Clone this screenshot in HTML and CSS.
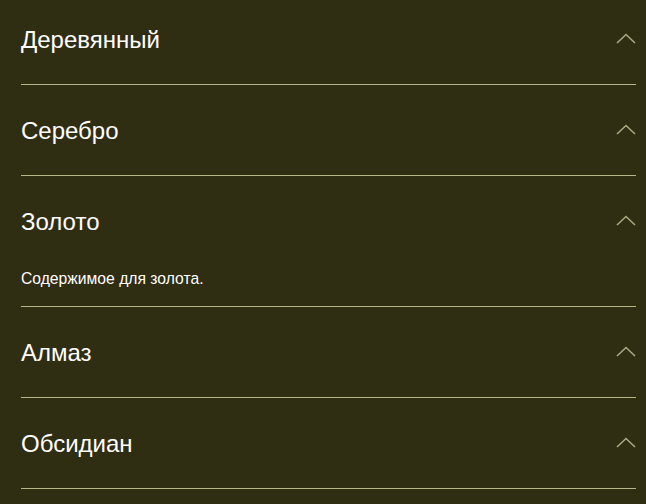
FILE: index.html
```html
<!DOCTYPE html>
<html lang="ru">
<head>
    <meta charset="UTF-8">
    <meta name="viewport" content="width=device-width, initial-scale=1.0">
    <title>Уровни</title>
    <link rel="stylesheet" href="styles.css">
</head>
<body>

<!-- Список уровней -->
<div class="accordion">
    <div class="item">
        <div class="item-header">
            <span class="item-title">Деревянный</span>
            <svg class="chevron" width="20" height="11" viewBox="0 0 20 11"><path d="M1 10 L10 1.5 L19 10" /></svg>
        </div>
    </div>
    <div class="item">
        <div class="item-header">
            <span class="item-title">Серебро</span>
            <svg class="chevron" width="20" height="11" viewBox="0 0 20 11"><path d="M1 10 L10 1.5 L19 10" /></svg>
        </div>
    </div>
    <div class="item open">
        <div class="item-header">
            <span class="item-title">Золото</span>
            <svg class="chevron" width="20" height="11" viewBox="0 0 20 11"><path d="M1 10 L10 1.5 L19 10" /></svg>
        </div>
        <div class="item-body">Содержимое для золота.</div>
    </div>
    <div class="item">
        <div class="item-header">
            <span class="item-title">Алмаз</span>
            <svg class="chevron" width="20" height="11" viewBox="0 0 20 11"><path d="M1 10 L10 1.5 L19 10" /></svg>
        </div>
    </div>
    <div class="item">
        <div class="item-header">
            <span class="item-title">Обсидиан</span>
            <svg class="chevron" width="20" height="11" viewBox="0 0 20 11"><path d="M1 10 L10 1.5 L19 10" /></svg>
        </div>
    </div>
</div>

</body>
</html>
```

FILE: styles.css
```css
body, html {
    margin: 0;
    padding: 0;
    background-color: #2f2d12;
    color: #ffffff;
    font-family: "Liberation Sans", Arial, sans-serif;
    overflow: hidden;
}

/* Обёртка аккордеона */
.accordion {
    margin: -6px 10px 0 21px;
}

.item {
    border-bottom: 1px solid #b6b68a;
}

/* Заголовок пункта */
.item-header {
    height: 90px;
    display: flex;
    justify-content: space-between;
    align-items: center;
}

.item-title {
    font-size: 24px;
    margin-top: 2px;
}

.chevron {
    display: block;
    margin-top: -2px;
}

.chevron path {
    fill: none;
    stroke: #a9a983;
    stroke-width: 1.6;
}

/* Содержимое открытого пункта */
.item-body {
    font-size: 15.7px;
    line-height: 22px;
    padding-bottom: 16px;
    margin-top: 2px;
}
```
